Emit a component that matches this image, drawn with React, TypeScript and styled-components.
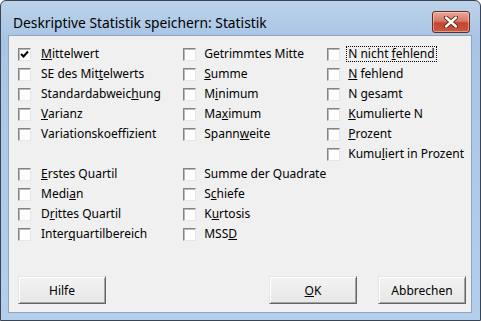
import React from 'react';
import styled, { createGlobalStyle } from 'styled-components';

const GlobalStyle = createGlobalStyle`
  html, body { margin: 0; padding: 0; background: #ffffff; }
  body { font-family: "Noto Sans", "Open Sans", sans-serif; color: #000; }
`;

const Window = styled.div`
  box-sizing: border-box;
  width: 481px;
  height: 321px;
  border: 1px solid #3a4453;
  border-radius: 6px 6px 0 0;
  background: linear-gradient(#bcd2ea, #a9c5e5 36px, #b4cfeb);
  display: flex;
  flex-direction: column;
  padding: 0 8px 7px 7px;
`;

const TitleBar = styled.div`
  height: 34px;
  box-sizing: border-box;
  padding: 8px 2px 0 5px;
  display: flex;
  align-items: center;
  justify-content: space-between;
`;

const Title = styled.div`
  font-size: 13.8px;
  color: #000;
  white-space: nowrap;
`;

const CloseButton = styled.div`
  box-sizing: border-box;
  width: 38px;
  height: 22px;
  border: 1px solid #6b2a20;
  border-radius: 3px;
  background: linear-gradient(#e9a99a, #d67a66 45%, #c4452f 55%, #c95a43);
  box-shadow: inset 0 0 0 1px rgba(255, 220, 210, 0.5);
  display: flex;
  align-items: center;
  justify-content: center;
`;

const Client = styled.div`
  flex: 1;
  background: #f0f0f0;
  border: 1px solid #8ba5c2;
  display: flex;
  flex-direction: column;
  padding: 8px 5px 8px 9px;
`;

const Columns = styled.div`
  display: flex;
`;

const Column = styled.div<{ $width?: number }>`
  display: flex;
  flex-direction: column;
  width: ${(p) => (p.$width ? `${p.$width}px` : 'auto')};
`;

const Spacer = styled.div`
  height: 20px;
`;

const Row = styled.div`
  height: 20px;
  display: flex;
  align-items: center;
  white-space: nowrap;
`;

const Box = styled.div`
  box-sizing: border-box;
  flex: none;
  width: 13px;
  height: 13px;
  background: #fff;
  border: 1px solid;
  border-color: #848484 #e6e6e6 #e6e6e6 #848484;
  box-shadow: inset 1px 1px 0 #b8b8b8;
  display: flex;
  align-items: center;
  justify-content: center;
`;

const Label = styled.span<{ $gap: number; $focus?: boolean }>`
  margin-left: ${(p) => p.$gap}px;
  font-size: 12px;
  line-height: 14px;
  padding: 0 1px;
  border: 1px dotted ${(p) => (p.$focus ? '#000' : 'transparent')};
`;

const Key = styled.span`
  text-decoration: underline;
`;

const Footer = styled.div`
  margin-top: auto;
  display: flex;
  align-items: center;
`;

const Button = styled.div<{ $push?: boolean }>`
  box-sizing: border-box;
  width: 88px;
  height: 28px;
  margin-left: ${(p) => (p.$push ? 'auto' : '0')};
  border: 1px solid;
  border-color: #e6e6e6 #656565 #656565 #e6e6e6;
  box-shadow: inset 1px 1px 0 #ffffff, inset -1px -1px 0 #a3a3a3;
  background: linear-gradient(#f3f3f3, #e7e7e7);
  font-size: 12px;
  display: flex;
  align-items: center;
  justify-content: center;
`;

const ButtonGap = styled.div`
  width: 21px;
`;

const Mnemonic = ({ text }: { text: string }) => {
  const i = text.indexOf('&');
  if (i < 0) return <>{text}</>;
  return (
    <>
      {text.slice(0, i)}
      <Key>{text[i + 1]}</Key>
      {text.slice(i + 2)}
    </>
  );
};

type Item = { label: string; checked?: boolean; focus?: boolean } | null;

const col1: Item[] = [
  { label: '&Mittelwert', checked: true },
  { label: 'SE des Mit&telwerts' },
  { label: 'Standardabweic&hung' },
  { label: '&Varianz' },
  { label: 'Variationskoeffizient' },
  null,
  { label: '&Erstes Quartil' },
  { label: 'Medi&an' },
  { label: 'D&rittes Quartil' },
  { label: 'Inter&quartilbereich' },
];

const col2: Item[] = [
  { label: 'Getrimmtes Mitte' },
  { label: '&Summe' },
  { label: 'M&inimum' },
  { label: 'Ma&ximum' },
  { label: 'Spann&weite' },
  null,
  { label: 'Summe der Quadrate' },
  { label: 'S&chiefe' },
  { label: 'K&urtosis' },
  { label: 'MSS&D' },
];

const col3: Item[] = [
  { label: 'N nicht &fehlend', focus: true },
  { label: '&N fehlend' },
  { label: 'N &gesamt' },
  { label: '&Kumulierte N' },
  { label: '&Prozent' },
  { label: 'Kumu&liert in Prozent' },
];

const Check = () => (
  <svg width="9" height="9" viewBox="0 0 9 9">
    <path d="M1 4 L3.5 6.5 L8 1.5" fill="none" stroke="#000" strokeWidth="2" />
  </svg>
);

const CheckColumn = ({ items, width, gap }: { items: Item[]; width?: number; gap: number }) => (
  <Column $width={width}>
    {items.map((item, i) =>
      item ? (
        <Row key={i}>
          <Box>{item.checked && <Check />}</Box>
          <Label $gap={gap} $focus={item.focus}>
            <Mnemonic text={item.label} />
          </Label>
        </Row>
      ) : (
        <Spacer key={i} />
      )
    )}
  </Column>
);

const App = () => {
  return (
    <>
      <GlobalStyle />
      <Window>
        <TitleBar>
          <Title>Deskriptive Statistik speichern: Statistik</Title>
          <CloseButton>
            <svg width="14" height="12" viewBox="0 0 14 12">
              <path d="M2 1.5 L12 10.5 M12 1.5 L2 10.5" stroke="#5a1a12" strokeWidth="4.2" strokeLinecap="round" />
              <path d="M2 1.5 L12 10.5 M12 1.5 L2 10.5" stroke="#ffffff" strokeWidth="2.4" strokeLinecap="round" />
            </svg>
          </CloseButton>
        </TitleBar>
        <Client>
          <Columns>
            <CheckColumn items={col1} width={167} gap={8} />
            <CheckColumn items={col2} width={144} gap={6} />
            <CheckColumn items={col3} gap={6} />
          </Columns>
          <Footer>
            <Button>Hilfe</Button>
            <Button $push>
              <Mnemonic text="&OK" />
            </Button>
            <ButtonGap />
            <Button>Abbrechen</Button>
          </Footer>
        </Client>
      </Window>
    </>
  );
};

export default App;
